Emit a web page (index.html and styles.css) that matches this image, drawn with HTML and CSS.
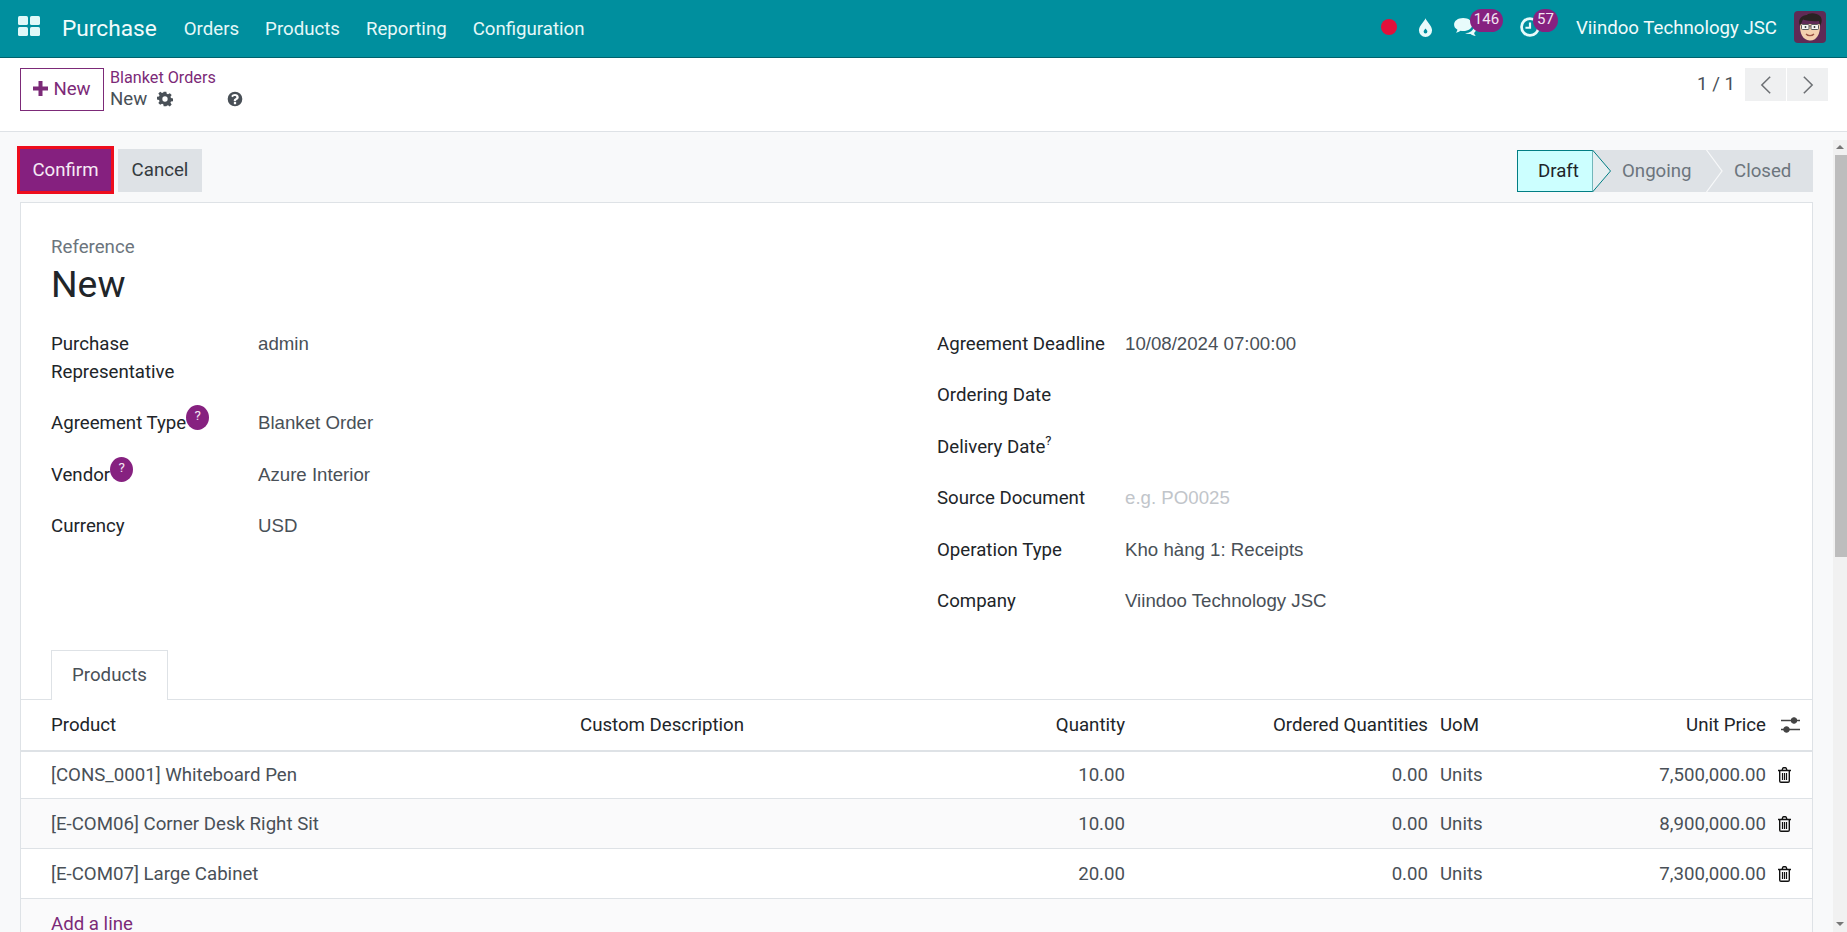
FILE: index.html
```html
<!DOCTYPE html>
<html lang="en">
<head>
<meta charset="utf-8">
<title>Blanket Orders - New</title>
<link rel="stylesheet" href="styles.css">
</head>
<body>
<div class="app">
  <header class="navbar">
    <svg class="apps" viewBox="0 0 22 20"><rect x="0" y="0" width="10" height="9" rx="1.6"/><rect x="12" y="0" width="10" height="9" rx="1.6"/><rect x="0" y="11" width="10" height="9" rx="1.6"/><rect x="12" y="11" width="10" height="9" rx="1.6"/></svg>
    <span class="brand">Purchase</span>
    <nav class="menu"><a>Orders</a><a>Products</a><a>Reporting</a><a>Configuration</a></nav>
    <div class="systray">
      <span class="dot"></span>
      <svg class="drop" viewBox="0 0 16 20"><path fill-rule="evenodd" d="M8 0C9.5 4 15 8 15 13a7 7 0 0 1-14 0C1 8 6.500 4 8 0ZM8 11c-.8 1.300-2 2-2 3.300a2 2 0 0 0 4 0C10 13 8.800 12.300 8 11Z"/></svg>
      <span class="tray-item chat">
        <svg viewBox="0 0 26 22"><path d="M11 1c5.800 0 10 3.100 10 7.300s-4.200 7.200-10 7.200c-1 0-1.900-.1-2.800-.3-1.600 1.100-3.300 1.700-5.200 2 .9-1 1.500-2.100 1.700-3.300C2 12.600 1 10.600 1 8.300 1 4.100 5.200 1 11 1Z"/><path d="M23 9.500c1.500 1.200 2.200 2.600 2.200 4.100 0 1.500-.8 2.900-2.200 3.900.2 1 .8 2.200 1.800 3.300-2.300-.3-4.300-1-5.700-2.200-2.300.4-4.300 0-6-.9 5.200 0 9.900-3.300 9.900-8.200Z"/></svg>
        <b class="badge">146</b>
      </span>
      <span class="tray-item clock">
        <svg viewBox="0 0 22 22"><circle cx="11" cy="11" r="9.300" fill="none" stroke="#e8fbfb" stroke-width="3"/><path d="M9.800 6h2.400v7H6v-2.300h3.800Z"/></svg>
        <b class="badge">57</b>
      </span>
      <span class="company">Viindoo Technology JSC</span>
      <svg class="avatar" viewBox="0 0 32 32">
        <rect width="32" height="32" rx="4" fill="#5f2b55"/>
        <path d="M6 13c-.5 10 3 16 9.500 16.500C22 30 26.500 24 26 13Z" fill="#f3cfae"/>
        <path d="M6 15C3 8 8 4 13 4c1-2 9-3 13 1 2.500 2.500 2 7 0 10l-1-5c-6 .5-12 0-16-1.500Z" fill="#2a2322"/>
        <rect x="7.500" y="13.500" width="7.500" height="5" rx="1" fill="#f7f7f2" stroke="#5a5a5a" stroke-width="1"/>
        <rect x="17" y="13.500" width="7.500" height="5" rx="1" fill="#f7f7f2" stroke="#5a5a5a" stroke-width="1"/>
        <path d="M15 15h2" stroke="#5a5a5a" stroke-width="1"/>
        <circle cx="11.500" cy="16" r=".9" fill="#333"/><circle cx="20.500" cy="16" r=".9" fill="#333"/>
        <path d="M12 23c2 2.200 6 2.200 8 0" fill="none" stroke="#9a5243" stroke-width="1.200"/>
      </svg>
    </div>
  </header>

  <section class="panel">
    <div class="panel-left">
      <button class="btn-new"><svg class="plus" viewBox="0 0 15 15"><path d="M5.500 0h4v5.500H15v4H9.500V15h-4V9.500H0v-4h5.500Z"/></svg><span>New</span></button>
      <div class="crumbs">
        <a class="crumb-link">Blanket Orders</a>
        <div class="crumb-current">
          <span>New</span>
          <svg class="gear" viewBox="0 0 24 24"><path fill-rule="evenodd" d="M10 1h4l.6 3.200 1.900.8 2.700-1.800 2.800 2.800-1.800 2.700.8 1.900 3 .6v4l-3 .6-.8 1.900 1.800 2.700-2.800 2.800-2.700-1.800-1.900.8L14 23h-4l-.6-3.200-1.900-.8-2.700 1.800L2 18l1.800-2.700-.8-1.900-3-.6v-4l3-.6.8-1.900L2 3.600 4.800 1.200 7.500 3l1.900-.8ZM12 8a4 4 0 1 0 0 8 4 4 0 0 0 0-8Z"/></svg>
          <svg class="help" viewBox="0 0 24 24"><path fill-rule="evenodd" d="M12 1a11 11 0 1 1 0 22 11 11 0 0 1 0-22ZM10.300 16.500v3.200h3.400v-3.200ZM12 4.500c-2.700 0-4.600 1.200-5.600 3.200l2.300 1.700c.7-1.100 1.600-1.800 3.100-1.800 1.200 0 2.200.6 2.200 1.600 0 .9-.7 1.400-1.800 2-1.400.7-2 1.600-2 3.100v1h3.400v-.6c0-.7.400-1 1.300-1.500 1.500-.8 2.700-1.900 2.700-3.900 0-3-2.900-4.800-5.600-4.800Z"/></svg>
        </div>
      </div>
    </div>
    <div class="pager">
      <span class="pager-count">1 / 1</span>
      <div class="pager-btns">
        <button><svg viewBox="0 0 14 24"><path d="M12 2 2 12l10 10"/></svg></button>
        <button><svg viewBox="0 0 14 24"><path d="m2 2 10 10L2 22"/></svg></button>
      </div>
    </div>
  </section>

  <div class="body-row">
    <main class="content">
      <div class="actions">
        <div class="action-btns">
          <button class="btn-confirm">Confirm</button>
          <button class="btn-cancel">Cancel</button>
        </div>
        <div class="statusbar">
          <span class="st st-active">Draft<svg class="st-arrow" viewBox="0 0 20 42"><path d="M.5 0 18.500 21 .5 42"/></svg></span>
          <span class="st st-mid">Ongoing<svg class="st-sep" viewBox="0 0 17 42"><path d="M.5 0 16 21 .5 42"/></svg></span>
          <span class="st st-last">Closed</span>
        </div>
      </div>

      <article class="sheet">
        <div class="title-block">
          <div class="ref-label">Reference</div>
          <h1 class="ref-name">New</h1>
        </div>
        <div class="fields">
          <div class="col col-left">
            <div class="field tall"><label>Purchase Representative</label><span>admin</span></div>
            <div class="field"><label>Agreement Type<i class="tip">?</i></label><span>Blanket Order</span></div>
            <div class="field"><label>Vendor<i class="tip">?</i></label><span>Azure Interior</span></div>
            <div class="field"><label>Currency</label><span>USD</span></div>
          </div>
          <div class="col col-right">
            <div class="field"><label>Agreement Deadline</label><span>10/08/2024 07:00:00</span></div>
            <div class="field"><label>Ordering Date</label><span></span></div>
            <div class="field"><label>Delivery Date<sup>?</sup></label><span></span></div>
            <div class="field"><label>Source Document</label><span class="ph">e.g. PO0025</span></div>
            <div class="field"><label>Operation Type</label><span>Kho hàng 1: Receipts</span></div>
            <div class="field"><label>Company</label><span>Viindoo Technology JSC</span></div>
          </div>
        </div>

        <div class="tabs"><a class="tab">Products</a></div>

        <table class="lines">
          <colgroup><col class="c-prod"><col class="c-desc"><col class="c-qty"><col class="c-ord"><col class="c-uom"><col class="c-price"><col class="c-act"></colgroup>
          <thead>
            <tr><th>Product</th><th>Custom Description</th><th class="r">Quantity</th><th class="r">Ordered Quantities</th><th>UoM</th><th class="r">Unit Price</th>
              <th class="act"><svg class="sliders" viewBox="0 0 19 16"><path d="M0 3.500h19M0 12.500h19" stroke-width="1.400"/><circle cx="13" cy="3.500" r="2.800"/><circle cx="5.500" cy="12.500" r="2.800"/></svg></th></tr>
          </thead>
          <tbody>
            <tr><td>[CONS_0001] Whiteboard Pen</td><td></td><td class="r">10.00</td><td class="r">0.00</td><td>Units</td><td class="r">7,500,000.00</td><td class="act"><svg class="trash" viewBox="0 0 14 16"><use href="#trash"/></svg></td></tr>
            <tr class="alt"><td>[E-COM06] Corner Desk Right Sit</td><td></td><td class="r">10.00</td><td class="r">0.00</td><td>Units</td><td class="r">8,900,000.00</td><td class="act"><svg class="trash" viewBox="0 0 14 16"><use href="#trash"/></svg></td></tr>
            <tr><td>[E-COM07] Large Cabinet</td><td></td><td class="r">20.00</td><td class="r">0.00</td><td>Units</td><td class="r">7,300,000.00</td><td class="act"><svg class="trash" viewBox="0 0 14 16"><use href="#trash"/></svg></td></tr>
            <tr class="alt add"><td colspan="7"><a>Add a line</a></td></tr>
          </tbody>
        </table>
      </article>
    </main>
    <aside class="scrollbar">
      <span class="arrow up"></span>
      <span class="thumb"></span>
      <span class="arrow down"></span>
    </aside>
  </div>
</div>
<svg class="defs" aria-hidden="true"><defs>
  <g id="trash"><path fill="none" stroke="#111" stroke-width="1.400" d="M2.200 4v10a1.300 1.300 0 0 0 1.300 1.300h7a1.300 1.300 0 0 0 1.300-1.300V4M.5 3.500h13M4.500 3.500l.8-2.300a.9.9 0 0 1 .8-.5h1.800a.9.9 0 0 1 .8.500l.8 2.300"/><path stroke="#111" stroke-width="1.200" d="M5 6v7M7 6v7M9 6v7"/></g>
</defs></svg>
</body>
</html>
```

FILE: styles.css
```css
* { box-sizing: border-box; }
html, body { margin: 0; padding: 0; height: 100%; overflow: hidden; }
body { font-family: Roboto, "Noto Sans", sans-serif; font-size: 18.67px; color: #212529; background: #fff; }
button { font: inherit; cursor: pointer; }
.defs { width: 0; height: 0; display: block; }
.app { display: flex; flex-direction: column; height: 932px; }

/* navbar */
.navbar { flex: 0 0 58px; display: flex; align-items: center; background: #008f9e; border-bottom: 1px solid #00626d; color: #fff; padding: 0 21px 3px 18px; }
.apps { width: 22px; height: 20px; fill: #e0f8f8; margin-top: -2px; }
.brand { font-size: 22.7px; margin: 3px 0 0 22px; color: #f2fbfb; }
.menu { display: flex; gap: 26px; margin: 3px 0 0 27px; color: #e6f8f8; }
.systray { margin-left: auto; display: flex; align-items: center; }
.dot { width: 16px; height: 16px; border-radius: 50%; background: #e2103a; }
.drop { width: 15px; height: 19px; fill: #e8fbfb; margin-left: 21px; }
.tray-item { position: relative; display: inline-flex; }
.chat { margin-left: 20px; }
.chat svg { width: 24px; height: 20px; fill: #e8fbfb; }
.clock { margin-left: 43px; }
.clock svg { width: 20px; height: 20px; fill: #e8fbfb; }
.badge { position: absolute; font-weight: 400; font-size: 15px; line-height: 21px; height: 23px; background: #862180; color: #f3e6f2; border-radius: 11.500px; text-align: center; top: -8px; }
.chat .badge { left: 17px; width: 33px; }
.clock .badge { left: 13px; width: 25px; }
.company { margin: 2px 0 0 36px; color: #f0fbfb; }
.avatar { width: 32px; height: 32px; margin-left: 17px; }

/* control panel */
.panel { flex: 0 0 74px; display: flex; justify-content: space-between; padding: 10px 19px 0 20px; background: #fff; border-bottom: 1px solid #dee2e6; }
.panel-left { display: flex; align-items: flex-start; }
.btn-new { width: 84px; height: 43px; background: #fff; border: 1px solid #7c2a78; color: #7c2a78; padding: 0 0 2px; display: flex; align-items: center; justify-content: center; gap: 5px; }
.plus { width: 15px; height: 15px; fill: #7c2a78; }
.crumbs { margin-left: 6px; }
.crumb-link { display: block; color: #7c2a78; font-size: 16.2px; line-height: 20px; }
.crumb-current { display: flex; align-items: center; color: #495057; line-height: 26px; margin-top: -2px; }
.gear { width: 16px; height: 16px; fill: #495057; margin-left: 10px; }
.help { width: 16px; height: 16px; fill: #495057; margin-left: 54px; margin-top: -1px; }
.pager { display: flex; align-items: flex-start; }
.pager-count { line-height: 32px; color: #495057; margin-right: 10px; }
.pager-btns { display: flex; gap: 1px; }
.pager-btns button { width: 41px; height: 33px; border: 0; background: #eff0f1; display: flex; align-items: center; justify-content: center; padding: 0; }
.pager-btns svg { width: 12px; height: 20px; fill: none; stroke: #6c6f73; stroke-width: 1.800; }

/* main */
.body-row { flex: 1; display: flex; min-height: 0; background: #f8f9fa; }
.content { flex: 1; min-width: 0; overflow: hidden; }
.actions { display: flex; justify-content: space-between; align-items: flex-start; height: 70px; padding: 14px 20px 0 17px; }
.action-btns { display: flex; align-items: center; gap: 4px; }
.btn-confirm { width: 97px; height: 48px; background: #85207f; border: 3px solid #ee0d1d; color: #f6eaf5; padding: 0; }
.btn-cancel { width: 84px; height: 43px; background: #dee2e6; border: 0; color: #343a40; padding: 0; }
.statusbar { display: flex; height: 42px; margin-top: 4px; }
.st { display: flex; align-items: center; background: #dee2e6; color: #6c757d; position: relative; }
.st-active { width: 76px; background: #ccffff; color: #212529; border: 1px solid #017e84; padding-left: 20px; }
.st-arrow { position: absolute; left: 100%; top: -1px; width: 20px; height: 42px; fill: #e6eef0; stroke: #017e84; stroke-width: 1; z-index: 1; }
.st-mid { width: 114px; padding-left: 29px; }
.st-sep { position: absolute; right: -16px; top: 0; width: 17px; height: 42px; fill: #dee2e6; stroke: #f8f9fa; stroke-width: 1.200; z-index: 1; }
.st-last { width: 106px; padding-left: 27px; }

.sheet { margin: 0 0 0 20px; width: 1793px; background: #fff; border: 1px solid #dee2e6; padding: 31px 0 0; }
.title-block { padding: 0 30px; }
.ref-label { color: #6c757d; line-height: 26px; }
.ref-name { margin: -1px 0 0; font-size: 37.300px; font-weight: 400; line-height: 50px; color: #212529; }
.fields { display: flex; margin-top: 21px; padding: 0 30px; }
.col { display: flex; flex-direction: column; gap: 23.400px; }
.col-left { width: 886px; }
.col-right { flex: 1; }
.field { display: flex; line-height: 28px; height: 28px; }
.field.tall { height: 56px; }
.col-left label { width: 207px; padding-right: 20px; }
.col-right label { width: 188px; }
.field span { color: #495057; font-family: "Liberation Sans", Arial, sans-serif; }
.field span.ph { color: #c1c5ca; }
.tip { display: inline-block; width: 23px; height: 25px; border-radius: 50%; background: #862180; color: #f3e6f2; font-style: normal; font-size: 13.500px; line-height: 21px; text-align: center; vertical-align: top; position: relative; top: -4px; }
sup { font-size: 13px; line-height: 0; vertical-align: 8px; }
.tabs { margin-top: 35px; padding: 0 30px; border-bottom: 1px solid #dee2e6; height: 50px; }
.tab { display: block; width: 117px; height: 50px; background: #fff; border: 1px solid #dee2e6; border-bottom: 0; color: #495057; text-align: center; line-height: 49px; }

.lines { width: 100%; border-collapse: collapse; table-layout: fixed; }
.c-prod { width: 553px; } .c-desc { width: 443px; } .c-qty { width: 114px; } .c-ord { width: 303px; } .c-uom { width: 102px; } .c-price { width: 236px; } .c-act { width: 40px; }
.lines th { font-weight: 400; text-align: left; height: 51px; border-bottom: 2px solid #dee2e6; padding: 0 6px; }
.lines td { height: 50px; border-bottom: 1px solid #dee2e6; color: #495057; padding: 0 6px; }
.lines tbody tr:first-child td { height: 48px; }
.lines th:first-child, .lines td:first-child { padding-left: 30px; }
.lines .r { text-align: right; }
.lines th.act { padding: 0 0 0 9px; }
.lines td.act { padding: 0 0 0 5px; }
.alt { background: #fafafb; }
.add a { color: #7c2a78; }
.sliders { width: 19px; height: 16px; stroke: #444; fill: #444; display: block; }
.trash { width: 15px; height: 16px; display: block; }

/* scrollbar */
.scrollbar { flex: 0 0 14px; display: flex; flex-direction: column; align-items: flex-end; padding-top: 8px; background: linear-gradient(#f8f9fa 8px, #f1f1f1 8px); }
.arrow { width: 14px; height: 15px; background: #f1f1f1; position: relative; display: block; flex: 0 0 15px; }
.arrow::after { content: ""; position: absolute; left: 3px; border-left: 4px solid transparent; border-right: 4px solid transparent; }
.up::after { top: 5px; border-bottom: 4px solid #777; }
.down::after { top: 6px; border-top: 4px solid #777; }
.thumb { width: 12px; height: 402px; background: #bdbdbd; }
.down { margin-top: auto; margin-bottom: 1px; }
```
